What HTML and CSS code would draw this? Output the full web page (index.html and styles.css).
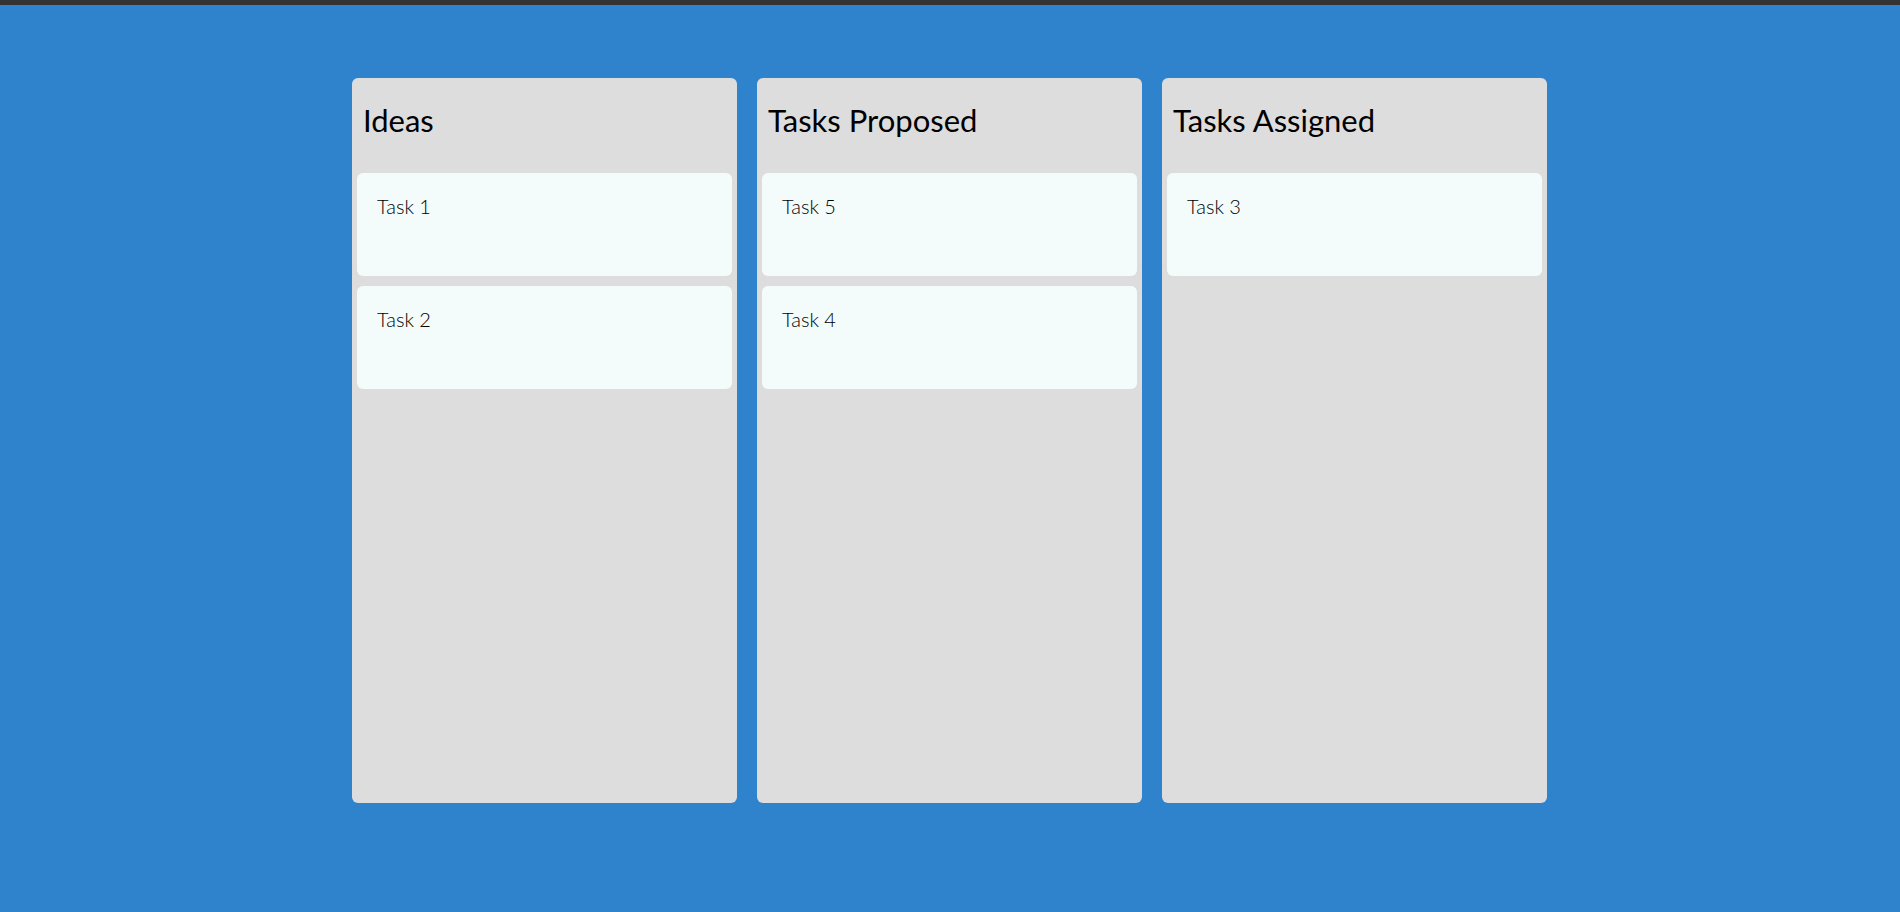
FILE: index.html
```html
<!DOCTYPE html>
<html lang="en">

<head>
    <meta charset="UTF-8">
    <meta name="viewport" content="width=device-width, initial-scale=1.0">
    <title>Kanban Board</title>
    <link rel="stylesheet" href="styles.css">
</head>

<body>
    <div class="topbar"></div>
    <div class="board">
        <div class="column">
            <h2>Ideas</h2>
            <div class="card">Task 1</div>
            <div class="card">Task 2</div>
        </div>
        <div class="column">
            <h2>Tasks Proposed</h2>
            <div class="card">Task 5</div>
            <div class="card">Task 4</div>
        </div>
        <div class="column">
            <h2>Tasks Assigned</h2>
            <div class="card">Task 3</div>
        </div>
    </div>
</body>

</html>
```

FILE: styles.css
```css
* {
    margin: 0;
    padding: 0;
    box-sizing: border-box;
}

body {
    min-height: 100vh;
    background: #2e83cc;
    font-family: Lato, "Open Sans", sans-serif;
}

.topbar {
    height: 5px;
    background: #333333;
}

.board {
    display: flex;
    justify-content: center;
    gap: 20px;
    margin-top: 73px;
    padding-right: 1px;
}

.column {
    width: 385px;
    height: 725px;
    background: #dddddd;
    border-radius: 6px;
    padding: 5px;
    display: flex;
    flex-direction: column;
    gap: 10px;
}

.column h2 {
    font-size: 31px;
    font-weight: normal;
    line-height: 31px;
    color: #000;
    padding: 22px 6px 0;
    margin-bottom: 27px;
}

.card {
    height: 103px;
    background: #f3fcfa;
    border-radius: 6px;
    padding: 21px 20px;
    font-size: 20px;
    font-weight: 300;
    line-height: 24px;
    color: #000;
}
```
